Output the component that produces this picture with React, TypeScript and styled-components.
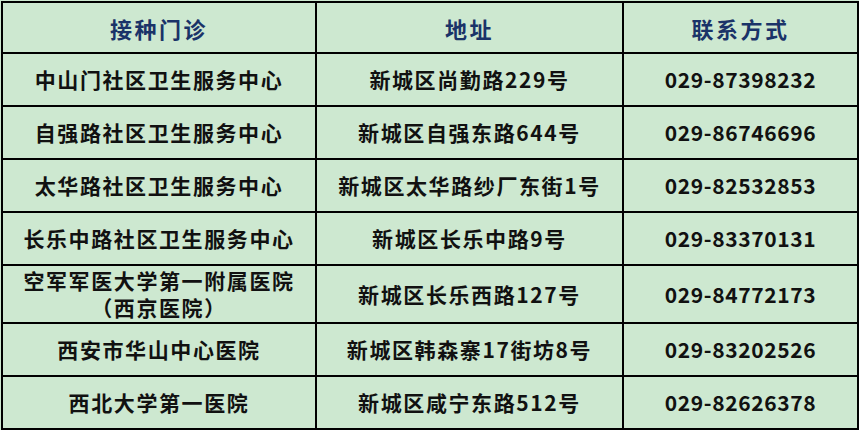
import React from "react";
import styled, { createGlobalStyle } from "styled-components";

const GlobalStyle = createGlobalStyle`
  html, body {
    margin: 0;
    padding: 0;
    background: #cde8d0;
  }
  body {
    font-family: "Noto Sans CJK SC", "Noto Sans", sans-serif;
  }
`;

const Page = styled.div`
  width: 859px;
  height: 430px;
  padding: 1px 0 0 1px;
  box-sizing: border-box;
  background: #cde8d0;
`;

const Table = styled.table`
  border-collapse: collapse;
  table-layout: fixed;
  width: 856px;
`;

const Cell = styled.td<{ $phone?: boolean; $tall?: boolean }>`
  border: 2px solid #000;
  height: ${(p) => (p.$tall ? 56 : 51)}px;
  padding: 0;
  text-align: center;
  vertical-align: middle;
  font-size: 21px;
  font-weight: 700;
  line-height: 27px;
  color: #111;
  letter-spacing: ${(p) => (p.$phone ? "0.6px" : "1.6px")};
  white-space: nowrap;
`;

const HeadCell = styled.th`
  border: 2px solid #000;
  height: 49px;
  padding: 0;
  text-align: center;
  vertical-align: middle;
  font-size: 22px;
  font-weight: 700;
  color: #1a3368;
  letter-spacing: 2.5px;
`;

const rows = [
  { name: ["中山门社区卫生服务中心"], addr: "新城区尚勤路229号", tel: "029-87398232" },
  { name: ["自强路社区卫生服务中心"], addr: "新城区自强东路644号", tel: "029-86746696" },
  { name: ["太华路社区卫生服务中心"], addr: "新城区太华路纱厂东街1号", tel: "029-82532853" },
  { name: ["长乐中路社区卫生服务中心"], addr: "新城区长乐中路9号", tel: "029-83370131" },
  { name: ["空军军医大学第一附属医院", "（西京医院）"], addr: "新城区长乐西路127号", tel: "029-84772173" },
  { name: ["西安市华山中心医院"], addr: "新城区韩森寨17街坊8号", tel: "029-83202526" },
  { name: ["西北大学第一医院"], addr: "新城区咸宁东路512号", tel: "029-82626378" },
];

export default function App() {
  return (
    <Page>
      <GlobalStyle />
      <Table>
        <colgroup>
          <col style={{ width: 314 }} />
          <col style={{ width: 307 }} />
          <col style={{ width: 235 }} />
        </colgroup>
        <thead>
          <tr>
            <HeadCell>接种门诊</HeadCell>
            <HeadCell>地址</HeadCell>
            <HeadCell>联系方式</HeadCell>
          </tr>
        </thead>
        <tbody>
          {rows.map((r) => {
            const tall = r.name.length > 1;
            return (
              <tr key={r.tel}>
                <Cell $tall={tall}>
                  {r.name.map((line) => (
                    <div key={line}>{line}</div>
                  ))}
                </Cell>
                <Cell $tall={tall}>{r.addr}</Cell>
                <Cell $tall={tall} $phone>
                  {r.tel}
                </Cell>
              </tr>
            );
          })}
        </tbody>
      </Table>
    </Page>
  );
}
